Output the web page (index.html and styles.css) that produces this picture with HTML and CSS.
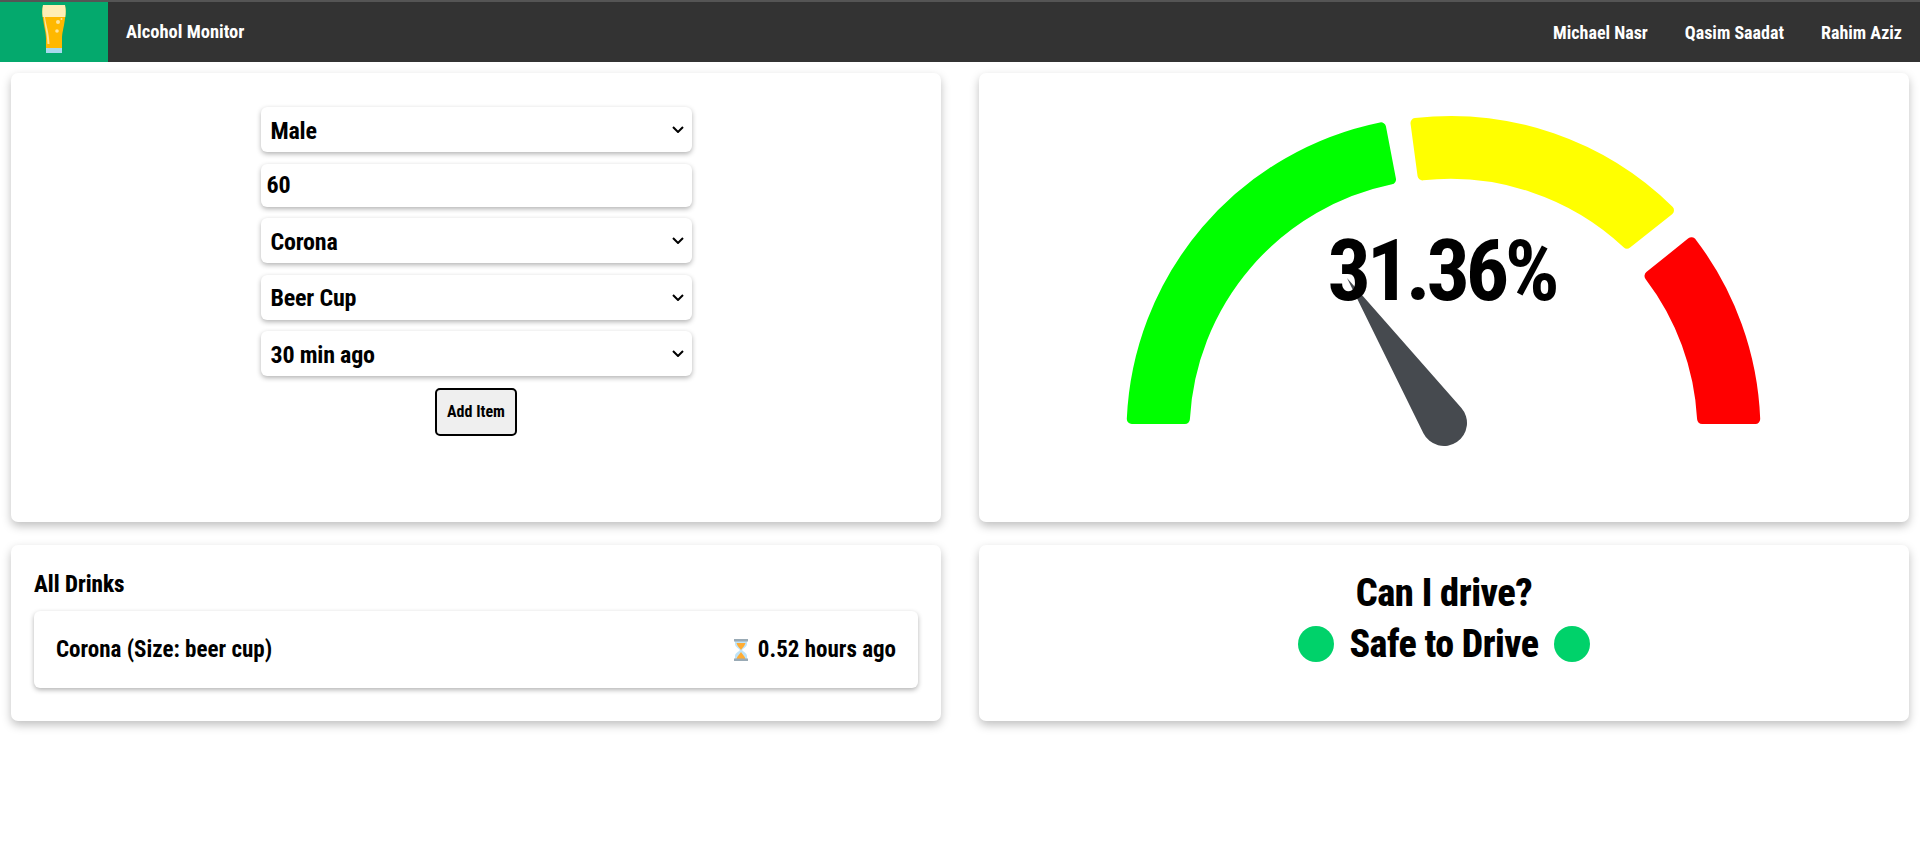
FILE: index.html
```html
<!DOCTYPE html>
<html lang="en">
<head>
<meta charset="utf-8">
<title>Alcohol Monitor</title>
<link rel="stylesheet" href="styles.css">
</head>
<body>
<header class="topbar">
  <div class="logo">
    <svg class="logo-icon" viewBox="0 0 24 50" width="24" height="50">
      <path d="M1 0H23C24 6 23.600 11 22.500 17C21.500 24 20 28 20 34V43H4V34C4 28 2.500 24 1.500 17C.4 11 0 6 1 0Z" fill="#ffb800"/>
      <path d="M1 0H23C24 5 23.800 8 23.300 12H.7C.2 8 0 5 1 0Z" fill="#ffeeb5"/>
      <path d="M3 12C4 20 7 27 7.500 39H5.500C5 28 2.500 20 2 12Z" fill="#ffe49a"/>
      <circle cx="16" cy="17" r="2" fill="#ffe49a"/><circle cx="19.500" cy="14" r="1" fill="#ffe49a"/><circle cx="15" cy="26" r="1.800" fill="#ffe49a"/>
      <rect x="4" y="43" width="16" height="5" fill="#a8d8ee"/>
    </svg>
  </div>
  <span class="brand">Alcohol Monitor</span>
  <nav class="names">
    <span>Michael Nasr</span>
    <span>Qasim Saadat</span>
    <span>Rahim Aziz</span>
  </nav>
</header>
<main class="board">
  <section class="card form-card">
    <form class="form">
      <select class="field"><option>Male</option><option>Female</option></select>
      <input class="field field-input" type="number" value="60">
      <select class="field"><option>Corona</option></select>
      <select class="field"><option>Beer Cup</option></select>
      <select class="field"><option>30 min ago</option></select>
      <button class="add" type="button">Add Item</button>
    </form>
  </section>
  <section class="card gauge-card">
    <div class="gauge">
      <svg class="gauge-svg" viewBox="1120 110 650 340" width="650" height="340">
        <g stroke-width="10" stroke-linejoin="round">
          <path fill="#00ff00" stroke="#00ff00" d="M1131.800 419A312 312 0 0 1 1381 127.300L1391 179.400A259 259 0 0 0 1184.900 419Z"/>
          <path fill="#ffff00" stroke="#ffff00" d="M1415.500 123A312 312 0 0 1 1669 210.300L1627 243.500A259 259 0 0 0 1422.500 175.400Z"/>
          <path fill="#ff0000" stroke="#ff0000" d="M1691.500 242.200A312 312 0 0 1 1755.200 419H1702.100A259 259 0 0 0 1649.500 276Z"/>
        </g>
        <path fill="#464a4f" d="M1347 278L1461.200 407.700A23 23 0 1 1 1423.400 433.200Z"/>
      </svg>
      <div class="gauge-value">31.36%</div>
    </div>
  </section>
  <section class="card drinks-card">
    <h2 class="drinks-title">All Drinks</h2>
    <div class="drink">
      <span>Corona (Size: beer cup)</span>
      <span class="drink-time">
        <svg viewBox="2 1 14 22" width="16" height="22">
          <path d="M3 2H15V6C15 9 11 10.500 10 12C11 13.500 15 15 15 18V22H3V18C3 15 7 13.500 8 12C7 10.500 3 9 3 6Z" fill="#bfe3f7"/>
          <path d="M4.500 5H13.500C13 8 10 10 9 12C8 10 5 8 4.500 5Z" fill="#ffac33"/>
          <path d="M9 14C10 16 13 18 13.500 21H4.500C5 18 8 16 9 14Z" fill="#ffac33"/>
          <rect x="2" y="1" width="14" height="2.500" fill="#99aab5"/><rect x="2" y="20.500" width="14" height="2.500" fill="#99aab5"/>
        </svg>
        <span>0.52 hours ago</span>
      </span>
    </div>
  </section>
  <section class="card drive-card">
    <h2 class="drive-title">Can I drive?</h2>
    <div class="drive-status">
      <span class="dot"></span>
      <span>Safe to Drive</span>
      <span class="dot"></span>
    </div>
  </section>
</main>
</body>
</html>
```
FILE: styles.css
```css
* { box-sizing: border-box; }
body {
  margin: 0;
  min-height: 100vh;
  background: #fff;
  color: #000;
  font-family: Roboto, "Liberation Sans", sans-serif;
  font-stretch: 75%;
  font-weight: 700;
}
.topbar {
  display: flex;
  align-items: center;
  height: 62px;
  background: #333;
  border-top: 2px solid #555;
  color: #fff;
  font-size: 18.500px;
}
.logo {
  width: 108px;
  height: 100%;
  background: #04a96d;
  display: flex;
  justify-content: center;
  padding-top: 3px;
}
.logo-icon { display: block; }
.brand { margin-left: 18px; }
.names { margin-left: auto; display: flex; gap: 37px; padding-right: 18px; font-size: 18px; }
.board {
  display: grid;
  grid-template-columns: 930px 930px;
  grid-template-rows: 449px 176px;
  column-gap: 38px;
  row-gap: 23px;
  padding: 11px 10px 0 11px;
}
.card {
  background: #fff;
  border-radius: 7px;
  box-shadow: 0 4px 10px rgba(0, 0, 0, .25);
}
.form-card { padding-top: 34px; }
.form {
  width: 431px;
  margin: 0 auto;
  display: flex;
  flex-direction: column;
  align-items: center;
  gap: 11.500px;
}
.field {
  width: 100%;
  height: 45px;
  border: 0;
  border-radius: 6px;
  background: #fff;
  box-shadow: 0 2px 5px rgba(0, 0, 0, .3);
  font-family: inherit;
  font-stretch: inherit;
  font-weight: 700;
  font-size: 24px;
  letter-spacing: -.2px;
  padding: 2px 0 0 10px;
  color: #000;
}
select.field {
  appearance: none;
  background-image: url("data:image/svg+xml,%3Csvg xmlns='http://www.w3.org/2000/svg' width='12' height='7'%3E%3Cpath d='M1 1l5 5 5-5' fill='none' stroke='%23000' stroke-width='2'/%3E%3C/svg%3E");
  background-repeat: no-repeat;
  background-position: right 8px center;
}
.field-input { height: 43px; padding: 0 6px; }
.add {
  width: 82px;
  height: 48px;
  border: 2px solid #000;
  border-radius: 5px;
  background: #efefef;
  font-family: inherit;
  font-stretch: inherit;
  font-weight: 700;
  font-size: 16px;
  color: #000;
}
.gauge-card { position: relative; }
.gauge-svg { position: absolute; left: 141px; top: 37px; }
.gauge { height: 100%; }
.gauge-value {
  position: absolute;
  left: 0;
  right: 5px;
  top: 150px;
  text-align: center;
  font-size: 86px;
  letter-spacing: -4.300px;
  line-height: 96px;
}
.drinks-card { padding: 26px 23px; }
.drinks-title { margin: 0 0 12px; font-size: 23px; font-weight: 800; line-height: 28px; }
.drink {
  display: flex;
  justify-content: space-between;
  align-items: center;
  height: 77px;
  padding: 0 22px;
  border-radius: 6px;
  box-shadow: 0 2px 5px rgba(0, 0, 0, .3);
  font-size: 23px;
}
.drink-time { display: flex; align-items: center; gap: 9px; }
.drive-card { text-align: center; padding-top: 26px; }
.drive-title { margin: 0; font-size: 38.500px; font-weight: 800; letter-spacing: -.5px; line-height: 44px; }
.drive-status {
  display: flex;
  justify-content: center;
  align-items: center;
  gap: 15px;
  margin-top: 3px;
  font-size: 38px;
  font-weight: 800;
  letter-spacing: -.5px;
  line-height: 52px;
}
.dot { width: 36px; height: 36px; border-radius: 50%; background: #00d26a; }
```
